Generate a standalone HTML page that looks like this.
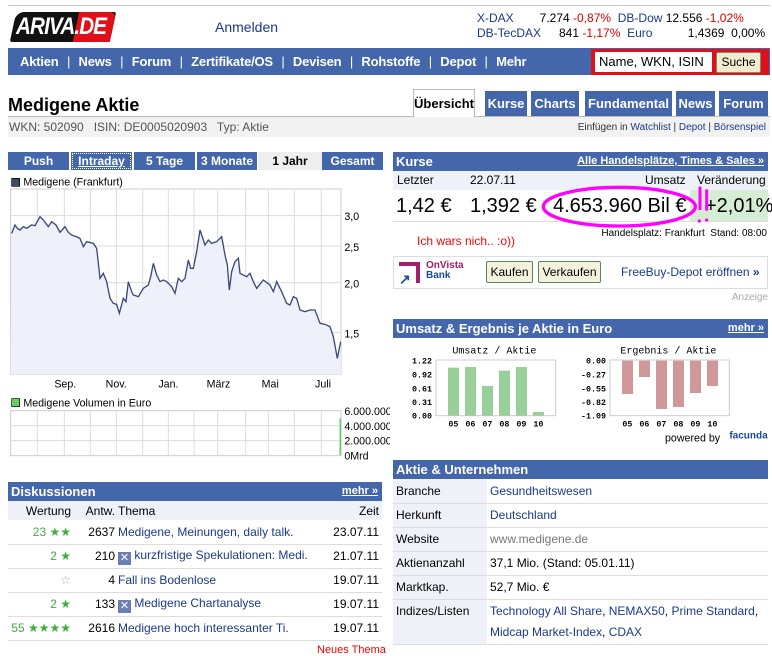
<!DOCTYPE html>
<html><head><meta charset="utf-8"><style>
*{margin:0;padding:0;box-sizing:border-box}
body{width:772px;height:652px;background:#fff;font-family:"Liberation Sans",Arial,sans-serif;font-size:12px;color:#000;position:relative;overflow:hidden}
.a{position:absolute;white-space:nowrap}
.blue{background:#4466aa;color:#fff}
.hd{position:absolute;height:19px;background:#4466aa;color:#fff;font-weight:bold;font-size:13px;line-height:19px;padding-left:3px}
.hd .r{position:absolute;right:4px;top:0;font-size:11px;text-decoration:underline}
.lk{color:#1a3a8a}
.nav span{margin:0 5px;font-weight:normal}
.tab{position:absolute;top:91px;height:25px;background:#4466aa;color:#fff;font-weight:bold;font-size:13px;line-height:25px;text-align:center}
.ct{position:absolute;top:152px;height:18px;background:#4466aa;color:#fff;font-weight:bold;font-size:12px;line-height:18px;text-align:center}
table{border-collapse:collapse}
</style></head><body>
<div class="a" style="left:8px;top:5px;width:762px;height:1px;background:#c8c8d8"></div>
<!-- logo -->
<div class="a" style="left:13px;top:12px;width:100px;height:30px;background:#111;border-radius:8px 2px 8px 2px;transform:skewX(-12deg)"></div>
<div class="a" style="left:76px;top:12px;width:37px;height:30px;background:#e0101a;border-radius:0 6px 0 0;transform:skewX(-12deg)"></div>
<div class="a" style="left:16px;top:12px;font:italic bold 24px/30px 'Liberation Sans',sans-serif;color:#fff;letter-spacing:-1px;transform:scaleX(0.86);transform-origin:0 0">ARIVA.DE</div>
<div class="a lk" style="left:215px;top:19px;font-size:14px">Anmelden</div>
<div class="a" style="left:477px;top:11px;font-size:12px;line-height:15px">
<span class="lk">X-DAX</span><span style="display:inline-block;width:56px;text-align:right">7.274</span> <span style="color:#d00">-0,87%</span>&nbsp; <span class="lk">DB-Dow</span> 12.556 <span style="color:#d00">-1,02%</span><br>
<span class="lk">DB-TecDAX</span><span style="display:inline-block;width:38px;text-align:right">841</span> <span style="color:#d00">-1,17%</span>&nbsp; <span class="lk">Euro</span><span style="display:inline-block;width:72px;text-align:right">1,4369</span>&nbsp; 0,00%</div>
<!-- nav -->
<div class="a blue nav" style="left:8px;top:48px;width:762px;height:27px;font-size:13px;line-height:27px;font-weight:bold;padding-left:12px;letter-spacing:-0.2px">Aktien <span>|</span> News <span>|</span> Forum <span>|</span> Zertifikate/OS <span>|</span> Devisen <span>|</span> Rohstoffe <span>|</span> Depot <span>|</span> Mehr</div>
<div class="a" style="left:591px;top:49px;width:178px;height:26px;background:#e0101a"></div>
<div class="a" style="left:595px;top:52px;width:117px;height:20px;background:#fff;font-size:13px;line-height:20px;padding-left:4px">Name, WKN, ISIN</div>
<div class="a" style="left:716px;top:52px;width:45px;height:21px;background:#f0ecd0;border:1px solid #886;border-radius:2px;font-size:12px;line-height:19px;text-align:center">Suche</div>
<!-- title -->
<div class="a" style="left:8px;top:95px;font-size:18px;font-weight:bold">Medigene Aktie</div>
<div class="a" style="left:413px;top:89px;width:62px;height:28px;background:#fff;border:1px solid #bbb;border-bottom:none;font-weight:bold;font-size:13px;line-height:28px;text-align:center;z-index:2">Übersicht</div>
<div class="tab" style="left:485px;width:42px">Kurse</div>
<div class="tab" style="left:531px;width:48px">Charts</div>
<div class="tab" style="left:585px;width:87px">Fundamental</div>
<div class="tab" style="left:676px;width:39px">News</div>
<div class="tab" style="left:719px;width:49px">Forum</div>
<div class="a" style="left:8px;top:116px;width:762px;height:21px;background:#f2f2f2;border-top:1px solid #bbb"></div>
<div class="a" style="left:9px;top:120px;font-size:12px;color:#555">WKN: 502090 &nbsp; ISIN: DE0005020903 &nbsp; Typ: Aktie</div>
<div class="a" style="right:6px;top:122px;font-size:10px;color:#333">Einfügen in <span class="lk">Watchlist</span> | <span class="lk">Depot</span> | <span class="lk">Börsenspiel</span></div>
<!-- chart tabs -->
<div class="ct" style="left:8px;width:61px">Push</div>
<div class="ct" style="left:71px;width:61px;text-decoration:underline;outline:1px dotted #fff;outline-offset:-2px">Intraday</div>
<div class="ct" style="left:134px;width:61px">5 Tage</div>
<div class="ct" style="left:197px;width:60px">3 Monate</div>
<div class="ct" style="left:258px;width:64px;background:#eee;color:#000">1 Jahr</div>
<div class="ct" style="left:322px;width:61px">Gesamt</div>
<svg class="a" style="left:0;top:145px" width="390" height="330" viewBox="0 0 1170 990" font-family="Liberation Sans, sans-serif">
<rect x="35" y="100" width="24" height="24" fill="#3a4a6a" stroke="#000" stroke-width="2"/>
<text x="70" y="122" font-size="32">Medigene (Frankfurt)</text>
<rect x="32" y="132" width="991" height="556" fill="#fff" stroke="#ccc" stroke-width="3"/>
<g stroke="#dcdcdc" stroke-width="3">
<path d="M112 132V688M193 132V688M271 132V688M349 132V688M428 132V688M505 132V688M582 132V688M653 132V688M737 132V688M805 132V688M883 132V688M964 132V688M32 212H1023M32 303H1023M32 413H1023M32 562H1023"/></g>
<path d="M32 688 L35 265 L45 240 L52 250 L60 255 L70 245 L80 250 L95 240 L105 242 L120 215 L130 225 L145 245 L155 230 L168 240 L180 262 L195 245 L205 262 L215 270 L228 275 L240 280 L250 305 L260 290 L280 295 L290 310 L300 400 L310 385 L320 410 L330 460 L340 475 L350 478 L358 505 L370 460 L378 470 L385 410 L395 440 L400 450 L415 455 L430 430 L445 420 L452 395 L460 355 L470 390 L480 410 L490 405 L500 410 L515 425 L525 445 L535 400 L545 410 L555 400 L565 345 L572 370 L580 370 L590 320 L600 255 L615 300 L625 285 L635 295 L650 290 L665 275 L675 330 L682 360 L688 435 L695 380 L705 350 L715 340 L720 385 L740 395 L750 385 L760 410 L770 430 L790 405 L810 420 L820 440 L830 410 L845 440 L860 475 L870 480 L880 455 L890 460 L900 495 L915 500 L930 495 L945 495 L960 535 L975 538 L990 545 L1000 575 L1012 640 L1022 590 L1023 688 Z" fill="#eef1f9"/>
<polyline fill="none" stroke="#3a4a78" stroke-width="4" points="35,265 45,240 52,250 60,255 70,245 80,250 95,240 105,242 120,215 130,225 145,245 155,230 168,240 180,262 195,245 205,262 215,270 228,275 240,280 250,305 260,290 280,295 290,310 300,400 310,385 320,410 330,460 340,475 350,478 358,505 370,460 378,470 385,410 395,440 400,450 415,455 430,430 445,420 452,395 460,355 470,390 480,410 490,405 500,410 515,425 525,445 535,400 545,410 555,400 565,345 572,370 580,370 590,320 600,255 615,300 625,285 635,295 650,290 665,275 675,330 682,360 688,435 695,380 705,350 715,340 720,385 740,395 750,385 760,410 770,430 790,405 810,420 820,440 830,410 845,440 860,475 870,480 880,455 890,460 900,495 915,500 930,495 945,495 960,535 975,538 990,545 1000,575 1012,640 1022,590"/>
<g font-size="32"><text x="1033" y="225">3,0</text><text x="1033" y="318">2,5</text><text x="1033" y="428">2,0</text><text x="1033" y="577">1,5</text>
<text x="163" y="728">Sep.</text><text x="317" y="728">Nov.</text><text x="475" y="728">Jan.</text><text x="620" y="728">März</text><text x="785" y="728">Mai</text><text x="945" y="728">Juli</text>
<text x="70" y="784">Medigene Volumen in Euro</text>
<text x="1033" y="810">6.000.000</text><text x="1033" y="855">4.000.000</text><text x="1033" y="899">2.000.000</text><text x="1033" y="944">0Mrd</text></g>
<rect x="35" y="761" width="24" height="24" fill="#6c6" stroke="#000" stroke-width="2"/>
<rect x="32" y="797" width="991" height="135" fill="#fff" stroke="#ccc" stroke-width="3"/>
<g stroke="#dcdcdc" stroke-width="3"><path d="M112 797V932M193 797V932M271 797V932M349 797V932M428 797V932M505 797V932M582 797V932M653 797V932M737 797V932M805 797V932M883 797V932M964 797V932M32 842H1023M32 887H1023"/></g>
<path d="M1021 820V930" stroke="#6c6" stroke-width="5"/>
</svg>
<!-- Diskussionen -->
<div class="hd" style="left:8px;top:482px;width:374px">Diskussionen<span class="r">mehr »</span></div>
<table class="a" style="left:8px;top:501px;width:374px;font-size:12px">
<tr style="background:#eef2f8;height:19px"><td style="width:66px;text-align:right;padding-right:3px">Wertung</td><td style="width:44px;text-align:right;padding-right:3px">Antw.</td><td>Thema</td><td style="text-align:right;padding-right:3px">Zeit</td></tr>
<tr style="height:24px;border-bottom:1px solid #ddd"><td style="text-align:right;color:#4a4;padding-right:3px">23 ★★</td><td style="text-align:right;padding-right:3px">2637</td><td class="lk">Medigene, Meinungen, daily talk.</td><td style="text-align:right;padding-right:3px">23.07.11</td></tr>
<tr style="height:24px;border-bottom:1px solid #ddd"><td style="text-align:right;color:#4a4;padding-right:3px">2 ★</td><td style="text-align:right;padding-right:3px">210</td><td class="lk"><span style="display:inline-block;width:13px;height:13px;background:#6a7fb0;color:#fff;font-size:11px;line-height:13px;text-align:center;vertical-align:-2px">✕</span> kurzfristige Spekulationen: Medi.</td><td style="text-align:right;padding-right:3px">21.07.11</td></tr>
<tr style="height:24px;border-bottom:1px solid #ddd"><td style="text-align:right;color:#aaa;padding-right:3px">☆</td><td style="text-align:right;padding-right:3px">4</td><td class="lk">Fall ins Bodenlose</td><td style="text-align:right;padding-right:3px">19.07.11</td></tr>
<tr style="height:24px;border-bottom:1px solid #ddd"><td style="text-align:right;color:#4a4;padding-right:3px">2 ★</td><td style="text-align:right;padding-right:3px">133</td><td class="lk"><span style="display:inline-block;width:13px;height:13px;background:#6a7fb0;color:#fff;font-size:11px;line-height:13px;text-align:center;vertical-align:-2px">✕</span> Medigene Chartanalyse</td><td style="text-align:right;padding-right:3px">19.07.11</td></tr>
<tr style="height:24px;border-bottom:1px solid #ddd"><td style="text-align:right;color:#4a4;padding-right:3px">55 ★★★★</td><td style="text-align:right;padding-right:3px">2616</td><td class="lk">Medigene hoch interessanter Ti.</td><td style="text-align:right;padding-right:3px">19.07.11</td></tr>
</table>
<div class="a" style="left:317px;top:644px;color:#e00;font-size:11px">Neues Thema</div>
<!-- Kurse -->
<div class="hd" style="left:393px;top:152px;width:375px">Kurse<span class="r">Alle Handelsplätze, Times &amp; Sales »</span></div>
<div class="a" style="left:393px;top:171px;width:375px;height:19px;background:#eef2f8;font-size:12px;line-height:19px">
<span class="a" style="left:4px">Letzter</span><span class="a" style="left:77px">22.07.11</span><span class="a" style="left:252px">Umsatz</span><span class="a" style="left:304px">Veränderung</span></div>
<div class="a" style="left:690px;top:190px;width:78px;height:32px;background:#d4edd4"></div>
<div class="a" style="left:393px;top:221px;width:375px;height:1px;background:#ddd"></div>
<div class="a" style="left:396px;top:195px;font-size:20px">1,42 €</div>
<div class="a" style="left:470px;top:195px;font-size:20px">1,392 €</div>
<div class="a" style="left:553px;top:195px;font-size:20px">4.653.960 Bil €</div>
<div class="a" style="left:705px;top:195px;font-size:20px">+2,01%</div>
<svg class="a" style="left:390px;top:150px" width="382" height="300" viewBox="0 0 1146 900" font-family="Liberation Mono, monospace">
<ellipse cx="688" cy="170" rx="228" ry="58" fill="none" stroke="#f0f" stroke-width="10"/>
<path d="M930 110V180M950 118V182" stroke="#f0f" stroke-width="9"/><circle cx="928" cy="213" r="5" fill="#f0f"/><circle cx="950" cy="210" r="5" fill="#f0f"/>
<g font-size="30" text-anchor="middle"><text x="313" y="610">Umsatz / Aktie</text><text x="835" y="610">Ergebnis / Aktie</text></g>
<rect x="138" y="630" width="359" height="167" fill="#fff" stroke="#ccc" stroke-width="3"/>
<rect x="660" y="630" width="358" height="167" fill="#fff" stroke="#ccc" stroke-width="3"/>
<g fill="#99d099"><rect x="174" y="653" width="33" height="144"/><rect x="225" y="651" width="33" height="146"/><rect x="276" y="708" width="33" height="89"/><rect x="327" y="662" width="33" height="135"/><rect x="378" y="651" width="33" height="146"/><rect x="429" y="786" width="33" height="11"/></g>
<g fill="#d09898"><rect x="696" y="632" width="33" height="100"/><rect x="747" y="632" width="33" height="49"/><rect x="798" y="632" width="33" height="145"/><rect x="849" y="632" width="33" height="139"/><rect x="900" y="632" width="33" height="97"/><rect x="951" y="632" width="33" height="76"/></g>
<g font-size="25" font-weight="bold" text-anchor="end"><text x="126" y="640">1.22</text><text x="126" y="682">0.92</text><text x="126" y="724">0.61</text><text x="126" y="765">0.31</text><text x="126" y="806">0.00</text>
<text x="648" y="640">0.00</text><text x="648" y="682">-0.27</text><text x="648" y="724">-0.55</text><text x="648" y="765">-0.82</text><text x="648" y="806">-1.09</text></g>
<g font-size="25" font-weight="bold" text-anchor="middle"><text x="190" y="830">05</text><text x="241" y="830">06</text><text x="292" y="830">07</text><text x="343" y="830">08</text><text x="394" y="830">09</text><text x="445" y="830">10</text>
<text x="712" y="830">05</text><text x="763" y="830">06</text><text x="814" y="830">07</text><text x="865" y="830">08</text><text x="916" y="830">09</text><text x="967" y="830">10</text></g>
<text x="825" y="874" font-size="32" font-family="Liberation Sans, sans-serif">powered by</text>
<text x="1018" y="866" font-size="30" font-weight="bold" fill="#1a4a9a" font-family="Liberation Sans, sans-serif">facunda</text>
</svg>
<div class="a" style="right:5px;top:228px;font-size:10px">Handelsplatz: Frankfurt &nbsp;Stand: 08:00</div>
<div class="a" style="left:417px;top:234px;font-size:12px;color:#f00">Ich wars nich.. :o))</div>
<div class="a" style="left:393px;top:256px;width:375px;height:33px;border:1px solid #ddd"></div>
<div class="a" style="left:399px;top:262px;width:21px;height:21px;border:4px solid #a0206a;border-left:none;border-bottom:none"></div>
<div class="a" style="left:399px;top:271px;color:#1a4a9a;font-weight:bold;font-size:14px">↗</div>
<div class="a" style="left:426px;top:261px;font-size:10px;font-weight:bold;line-height:10px;color:#a0206a">OnVista<br><span style="color:#1a4a9a">Bank</span></div>
<div class="a" style="left:486px;top:261px;width:47px;height:22px;background:#f4f2dc;border:1px solid #585;border-radius:2px;font-size:12px;line-height:20px;text-align:center">Kaufen</div>
<div class="a" style="left:538px;top:261px;width:63px;height:22px;background:#f4f2dc;border:1px solid #585;border-radius:2px;font-size:12px;line-height:20px;text-align:center">Verkaufen</div>
<div class="a lk" style="left:621px;top:265px;font-size:12px">FreeBuy-Depot eröffnen <b>»</b></div>
<div class="a" style="right:4px;top:292px;font-size:10px;color:#aaa">Anzeige</div>
<div class="hd" style="left:393px;top:319px;width:375px">Umsatz &amp; Ergebnis je Aktie in Euro<span class="r">mehr »</span></div>
<!-- Aktie & Unternehmen -->
<div class="hd" style="left:393px;top:460px;width:375px">Aktie &amp; Unternehmen</div>
<table class="a" style="left:393px;top:479px;width:375px;font-size:12px">
<tr style="height:24px;border-bottom:1px solid #ddd"><td style="width:94px;background:#eef2f8;padding-left:3px">Branche</td><td class="lk" style="padding-left:3px">Gesundheitswesen</td></tr>
<tr style="height:24px;border-bottom:1px solid #ddd"><td style="background:#eef2f8;padding-left:3px">Herkunft</td><td class="lk" style="padding-left:3px">Deutschland</td></tr>
<tr style="height:24px;border-bottom:1px solid #ddd"><td style="background:#eef2f8;padding-left:3px">Website</td><td style="padding-left:3px;color:#777">www.medigene.de</td></tr>
<tr style="height:24px;border-bottom:1px solid #ddd"><td style="background:#eef2f8;padding-left:3px">Aktienanzahl</td><td style="padding-left:3px">37,1 Mio. (Stand: 05.01.11)</td></tr>
<tr style="height:24px;border-bottom:1px solid #ddd"><td style="background:#eef2f8;padding-left:3px">Marktkap.</td><td style="padding-left:3px">52,7 Mio. €</td></tr>
<tr style="height:45px;border-bottom:1px solid #ddd"><td style="background:#eef2f8;padding-left:3px;vertical-align:top;padding-top:4px">Indizes/Listen</td><td class="lk" style="padding-left:3px;line-height:21px;vertical-align:top;padding-top:1px">Technology All Share<span style="color:#000">,</span> NEMAX50<span style="color:#000">,</span> Prime Standard<span style="color:#000">,</span><br>Midcap Market-Index<span style="color:#000">,</span> CDAX</td></tr>
</table>
</body></html>
